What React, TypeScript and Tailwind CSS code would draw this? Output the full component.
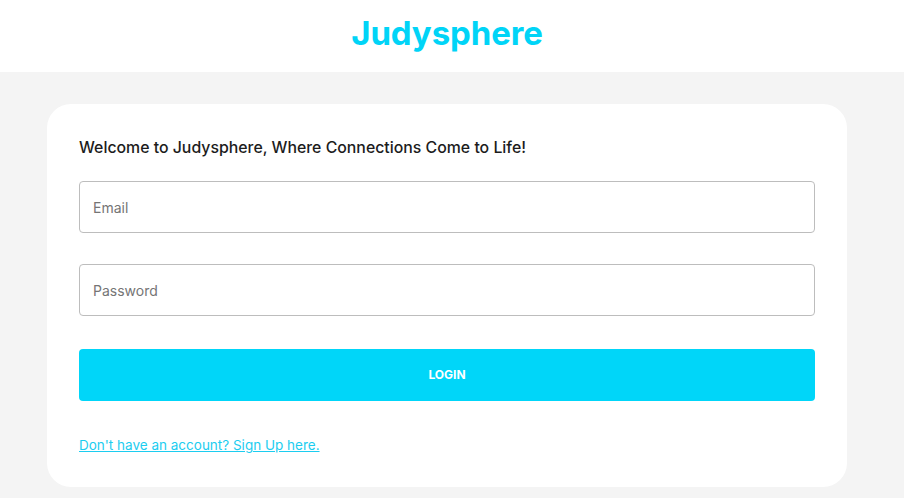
export default function App() {
  return (
    <div className="min-h-[498px] bg-[#f4f4f4] font-['Inter','Liberation_Sans',sans-serif]">
      {/* Header */}
      <header className="h-[72px] bg-white flex items-center justify-center pr-[10px]">
        <h1 className="text-[33px] font-bold text-[#00d4f7] tracking-[-0.1px] -mt-1">Judysphere</h1>
      </header>

      {/* Login card */}
      <div className="w-[894px] pt-8 pb-3">
        <div className="mx-auto w-[800px] bg-white rounded-[24px] p-8">
          <h2 className="text-[15.85px] leading-6 font-medium text-[#1c1c1c]">
            Welcome to Judysphere, Where Connections Come to Life!
          </h2>

          <form className="mt-[21px] flex flex-col">
            <input
              type="email"
              placeholder="Email"
              className="h-[52px] w-full rounded border border-[#bdbdbd] px-[13px] text-sm text-[#333] placeholder:text-[#757575] outline-none"
            />
            <input
              type="password"
              placeholder="Password"
              className="mt-[31px] h-[52px] w-full rounded border border-[#bdbdbd] px-[13px] text-sm text-[#333] placeholder:text-[#757575] outline-none"
            />
            <button
              type="button"
              className="mt-[33px] h-[52px] w-full rounded bg-[#00d6f9] text-white text-xs font-bold uppercase"
            >
              Login
            </button>
          </form>

          <div className="mt-[33px] leading-5">
            <a href="#" className="text-[13.5px] text-[#1ccdf0] underline">
              Don't have an account? Sign Up here.
            </a>
          </div>
        </div>
      </div>
    </div>
  );
}
